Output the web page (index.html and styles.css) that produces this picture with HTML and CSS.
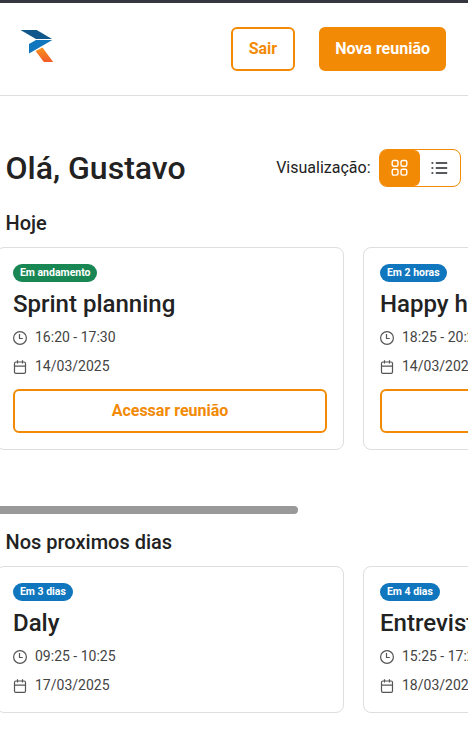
FILE: index.html
```html
<!DOCTYPE html>
<html lang="pt-BR">
<head>
<meta charset="utf-8">
<title>Reuniões</title>
<link rel="stylesheet" href="styles.css">
</head>
<body>
<svg class="symbols" width="0" height="0">
  <symbol id="clock" viewBox="0 0 14 14"><path d="M6.500 3V7.500h3.300" /><circle cx="7" cy="7" r="6.400"/></symbol>
  <symbol id="calendar" viewBox="0 0 14 14"><rect x="1.500" y="2" width="11" height="11.400" rx="1.400"/><path d="M1.500 6.100h11M4.500 .2v3.400M9.500 .2v3.400"/></symbol>
</svg>
<header class="header">
  <svg class="logo" width="34" height="34" viewBox="0 0 34 34">
    <defs><linearGradient id="leg" x1="0" y1="0" x2="0" y2="1"><stop offset="0" stop-color="#f7941e"/><stop offset="1" stop-color="#f15a29"/></linearGradient></defs>
    <path fill="#10578b" d="M.5 1H16.700L32 10.100H16z"/>
    <path fill="#1076bd" d="M16 10.900H32.300L9 24.600V15.100z"/>
    <path fill="url(#leg)" d="M15.600 22L22.500 18.400L33.200 33H23.800z"/>
  </svg>
  <div class="actions">
    <button class="btn outline">Sair</button>
    <button class="btn solid">Nova reunião</button>
  </div>
</header>
<main>
  <div class="welcome">
    <h1>Olá, Gustavo</h1>
    <div class="view">
      <span>Visualização:</span>
      <div class="toggle">
        <button class="option active" aria-label="Grade"><svg width="18" height="18" viewBox="0 0 18 18"><rect x="1.200" y="1.500" width="5.800" height="5.800" rx="1.500"/><rect x="10" y="1.500" width="5.800" height="5.800" rx="1.500"/><rect x="1.200" y="10.300" width="5.800" height="5.800" rx="1.500"/><rect x="10" y="10.300" width="5.800" height="5.800" rx="1.500"/></svg></button>
        <button class="option" aria-label="Lista"><svg width="18" height="18" viewBox="0 0 18 18"><path d="M4.800 4h11.400M4.800 9h11.400M4.800 14h11.400M.5 4h1.800M.5 9h1.800M.5 14h1.800"/></svg></button>
      </div>
    </div>
  </div>
  <section class="today">
    <h2>Hoje</h2>
    <div class="cards">
      <article class="card">
        <span class="badge live">Em andamento</span>
        <h3>Sprint planning</h3>
        <p><svg class="icon"><use href="#clock"/></svg>16:20 - 17:30</p>
        <p><svg class="icon"><use href="#calendar"/></svg>14/03/2025</p>
        <button class="btn outline">Acessar reunião</button>
      </article>
      <article class="card">
        <span class="badge">Em 2 horas</span>
        <h3>Happy hour</h3>
        <p><svg class="icon"><use href="#clock"/></svg>18:25 - 20:25</p>
        <p><svg class="icon"><use href="#calendar"/></svg>14/03/2025</p>
        <button class="btn outline" aria-label="Acessar reunião"></button>
      </article>
    </div>
    <div class="scroll"></div>
  </section>
  <section>
    <h2>Nos proximos dias</h2>
    <div class="cards">
      <article class="card">
        <span class="badge">Em 3 dias</span>
        <h3>Daly</h3>
        <p><svg class="icon"><use href="#clock"/></svg>09:25 - 10:25</p>
        <p><svg class="icon"><use href="#calendar"/></svg>17/03/2025</p>
      </article>
      <article class="card">
        <span class="badge">Em 4 dias</span>
        <h3>Entrevista</h3>
        <p><svg class="icon"><use href="#clock"/></svg>15:25 - 17:25</p>
        <p><svg class="icon"><use href="#calendar"/></svg>18/03/2025</p>
      </article>
    </div>
  </section>
</main>
</body>
</html>
```
FILE: styles.css
```css
* { box-sizing: border-box; margin: 0; padding: 0; }
html { overflow: hidden; }
body { height: 735px; overflow: hidden; border-top: 3px solid #343740; background: #fff; color: #222; font: 16px/1.5 Roboto, sans-serif; }
.symbols { display: none; }
svg { fill: none; flex-shrink: 0; }
main { overflow: hidden; }
.header { display: flex; align-items: center; justify-content: space-between; height: 93px; padding: 0 22px 0 20px; border-bottom: 1px solid #dedede; }
.logo { margin-bottom: 6px; }
.actions { display: flex; gap: 24px; }
.btn { height: 44px; padding: 0 16px; border: 2px solid #f28a05; border-radius: 6px; font: 700 16px/24px Roboto, sans-serif; white-space: nowrap; }
.outline { background: #fff; color: #f28a05; }
.solid { background: #f28a05; color: #fff; padding: 0 14px; }
.welcome { display: flex; align-items: center; justify-content: space-between; height: 38px; margin: 53px 7px 0 5.5px; }
h1 { font-size: 32px; line-height: 38px; font-weight: 500; }
.view { display: flex; align-items: center; gap: 8.5px; }
.view span { line-height: 24px; }
.toggle { display: flex; width: 82px; height: 38px; border: 1px solid #f28a05; border-radius: 8px; }
.option { display: grid; place-items: center; width: 40px; height: 36px; border: 0; border-radius: 6px; background: none; }
.option svg { stroke: #212529; stroke-width: 1.6; }
.option.active { background: #f28a05; }
.option.active svg { stroke: #fff; stroke-width: 1.4; }
h2 { margin-left: 5.5px; font-size: 20px; line-height: 24px; font-weight: 500; }
.today { margin-top: 24px; }
.cards { display: flex; gap: 19px; margin: 12px 0 0 -4px; }
.card { display: flex; flex: 0 0 348px; flex-direction: column; gap: 8px; padding: 16px; border: 1px solid #dedede; border-radius: 8px; }
.badge { align-self: flex-start; height: 18px; padding: 0 6.9px; border-radius: 9px; background: #1076bd; color: #fff; font-size: 10.5px; line-height: 18px; font-weight: 700; }
.live { background: #198754; }
h3 { font-size: 24px; line-height: 29px; font-weight: 500; }
.card p { display: flex; align-items: center; gap: 8px; height: 21px; color: #444; font-size: 14px; line-height: 21px; }
.icon { width: 14px; height: 14px; stroke: #555; stroke-width: 1.2; }
.card .btn { margin-top: 4px; }
.scroll { width: 298px; height: 8px; margin: 56px 0 16px; border-radius: 0 4px 4px 0; background: #999; }
```
